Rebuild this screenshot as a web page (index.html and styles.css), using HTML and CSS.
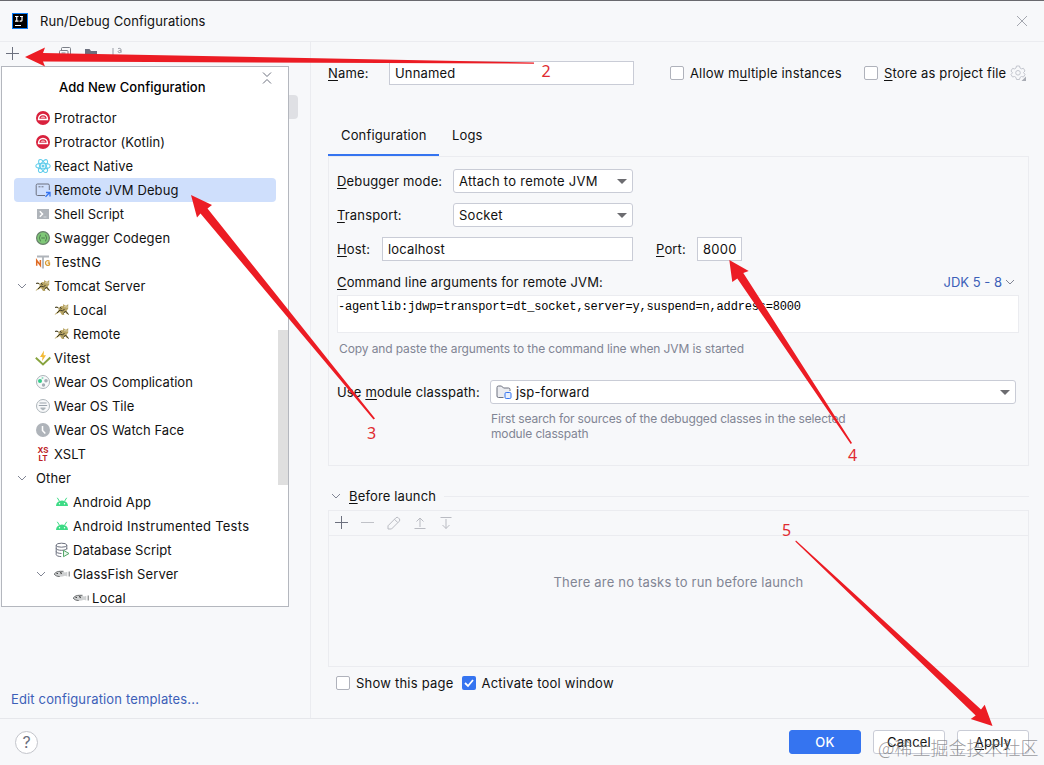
FILE: index.html
```html
<!DOCTYPE html>
<html lang="en">
<head>
<meta charset="utf-8">
<title>Run/Debug Configurations</title>
<link rel="stylesheet" href="styles.css">
</head>
<body>
<svg width="0" height="0" class="sprites">
  <symbol id="protractor" viewBox="0 0 16 16"><circle cx="8" cy="8" r="7" fill="#d9213d"/><path d="M3.600 9.500V9a4.400 4.400 0 0 1 8.800 0v.5z" fill="none" stroke="#fff" stroke-width="1.500"/><path d="M5.500 8.200a2.600 2.600 0 0 1 5 0z" fill="#fff" opacity=".6"/></symbol>
  <symbol id="react" viewBox="0 0 16 16"><g fill="none" stroke="#62cdeb" stroke-width="1.1"><ellipse cx="8" cy="8" rx="7.2" ry="2.8"/><ellipse cx="8" cy="8" rx="7.2" ry="2.8" transform="rotate(60 8 8)"/><ellipse cx="8" cy="8" rx="7.2" ry="2.8" transform="rotate(120 8 8)"/></g><circle cx="8" cy="8" r="1.5" fill="#62cdeb"/></symbol>
  <symbol id="remote" viewBox="0 0 16 16"><path d="M10 13.5H2.500a1.300 1.300 0 0 1-1.300-1.300V3.300A1.300 1.300 0 0 1 2.500 2H13a1.300 1.300 0 0 1 1.300 1.300V8" fill="none" stroke="#6c707e"/><path d="M3.500 4.800h2m1 0h2" stroke="#6c707e"/><path d="M10.500 14.800l4-4m-3.500-.3h4v4" fill="none" stroke="#3574f0" stroke-width="1.300"/></symbol>
  <symbol id="shell" viewBox="0 0 16 16"><path d="M2 3h12v10H2z" fill="#afb4ba"/><path d="M4.800 5.300L7.500 8l-2.700 2.700" fill="none" stroke="#fff" stroke-width="1.500"/><path d="M8.500 11h3" stroke="#d7dade"/></symbol>
  <symbol id="swagger" viewBox="0 0 16 16"><circle cx="8" cy="8" r="6.400" fill="#7fc877" stroke="#68806b" stroke-width="1.200"/><path d="M6 4.800c-1.500 0-.5 2.500-2 3.200 1.500.7.500 3.200 2 3.200M10 4.800c1.500 0 .5 2.500 2 3.200-1.500.7-.5 3.200-2 3.200M6.300 8h3.600" fill="none" stroke="#47704b" stroke-width=".9"/></symbol>
  <symbol id="testng" viewBox="0 0 16 16"><path d="M2 2.500h12M8 2.500v12" stroke="#afb4ba" stroke-width="1.800"/><path d="M1.700 11.800V6.300l3.700 5.200V6" fill="none" stroke="#df6b24" stroke-width="1.500"/><path d="M14.500 7.500c-1.300-1.500-4-1-4 1.500s2.700 3 4 1.700V9h-1.800" fill="none" stroke="#d99b30" stroke-width="1.300"/></symbol>
  <symbol id="tomcat" viewBox="0 0 16 16"><path d="M1 5.500c2-1.500 3.500-.5 4 .5l2-2 2 .2.300-2.200 1.800 1.500h1.500L14.200 2v4.500L12.500 9l2.500 3.500-2-.2-2.200-2.300-1.300 1.500 1 1.500H8L6 10l-4.500 2.500H.5L4 9 5 6.500z" fill="#b7a462"/><path d="M1 5.500c1.500-.7 2.600-.4 3.500.8M3 11l3-3 2.500 1 2-2M9.500 11.500l2-2.500 3 3.500M6 5l1.500 2" fill="none" stroke="#3c3928"/><path d="M10.500 4.200h1v1h-1zM12.500 4.500h1v1h-1z" fill="#fff"/></symbol>
  <symbol id="vitest" viewBox="0 0 16 16"><path d="M.800 7.800L8 14.500l7.300-7" fill="none" stroke="#87a33e" stroke-width="1.900"/><path d="M9 .5L5 7h2.500L7 11.200 11 5.200H8.600z" fill="#f3ba35"/></symbol>
  <symbol id="complication" viewBox="0 0 16 16"><circle cx="8" cy="8" r="6.500" fill="#f8f9fa" stroke="#adb5ba"/><circle cx="5" cy="7" r="2" fill="#35cb8a"/><circle cx="11" cy="6.800" r="1.800" fill="#a5adb5"/><circle cx="8.500" cy="11" r="1.700" fill="#a5adb5"/><circle cx="7.500" cy="4" r="1" fill="#8fd9bc"/></symbol>
  <symbol id="tile" viewBox="0 0 16 16"><circle cx="8" cy="8" r="6.500" fill="#f8f9fa" stroke="#adb5ba"/><path d="M4.500 5h7M3.800 7.500h8.400" stroke="#9ba4ac"/><path d="M5.500 9.500h5v1.200L8 12.500l-2.500-1.800z" fill="#adb5ba"/></symbol>
  <symbol id="clock" viewBox="0 0 16 16"><circle cx="8" cy="8" r="7" fill="#afb4ba"/><path d="M7.500 4v4.500l2.800 3" fill="none" stroke="#fff" stroke-width="1.500"/></symbol>
  <symbol id="xslt" viewBox="0 0 16 16"><g class="xslt-text"><text x="8" y="7">XS</text><text x="8" y="15">LT</text></g></symbol>
  <symbol id="android" viewBox="0 0 16 16"><path d="M2 12a6 5.600 0 0 1 12 0z" fill="#3ddb85"/><path d="M3.300 3.800l2 3.200M12.700 3.800l-2 3.200" stroke="#3ddb85"/><circle cx="5.500" cy="9.700" r=".7" fill="#fff"/><circle cx="10.500" cy="9.700" r=".7" fill="#fff"/></symbol>
  <symbol id="database" viewBox="0 0 16 16"><g fill="none" stroke="#6c707e"><ellipse cx="7.500" cy="3.200" rx="5.300" ry="2"/><path d="M2.200 3.200v9.500c0 1 2.300 1.800 5 1.900M12.800 3.200v4.300M2.200 6.300c0 1.200 2.400 2 5.300 2s5.300-.8 5.300-2M2.200 9.500c0 1 2 1.900 5.300 2"/></g><path d="M9.500 8.300v6.400l5.500-3.200z" fill="#e9f7eb" stroke="#55a76a"/></symbol>
  <symbol id="fish" viewBox="0 0 16 16"><path d="M.200 8C2.500 4.700 7 4.600 11 6.400l2.300-.6v4.600L11 9.800C7 11.500 2.500 11.300.200 8z" fill="#cfd1d2"/><path d="M.200 8C2 5.800 4 5.300 6.500 5.300h3M.200 8c1 1.700 3 2.400 5.500 2.500M15.200 5.500v5" stroke="#6a6d6f" fill="none"/><path d="M6.500 6l1 2M2.500 7.500h1.500" stroke="#444" stroke-width="1.200"/></symbol>
  <symbol id="chevron" viewBox="0 0 16 16"><path d="M4 6l4 4 4-4" fill="none" stroke="#818594"/></symbol>
</svg>

<header class="titlebar">
  <svg class="logo" width="16" height="16" viewBox="0 0 16 16"><path d="M0 0h16v16H0z" fill="#087cfa"/><path d="M1 1h14v14H1z" fill="#000"/><path d="M3 3.500h3.500M4.750 3.500v4.500M3 8.200h3.500M8 3.500h3M10 3.500v3.700c0 1-1.500 1.200-2.300.5M3 12.500h6" fill="none" stroke="#fff" stroke-width="1.200"/></svg>
  <h1>Run/Debug Configurations</h1>
  <svg class="close" width="12" height="12" viewBox="0 0 12 12"><path d="M1 1l10 10M11 1L1 11" stroke="#a4a7af"/></svg>
</header>

<main class="content">
  <aside class="sidebar">
    <div class="toolbar">
      <svg width="14" height="16" viewBox="0 0 14 16"><path d="M0 7.500h13M6.500 1v13" stroke="#6c707e"/></svg>
      <svg class="copy" width="14" height="16" viewBox="0 0 14 16"><path d="M3.500 4V2.500A1 1 0 0 1 4.500 1.500h7a1 1 0 0 1 1 1v7a1 1 0 0 1-1 1H10M1.500 5.500a1 1 0 0 1 1-1H9a1 1 0 0 1 1 1v8H1.500zM3.500 7h4" fill="none" stroke="#7b7f88"/></svg>
      <svg width="14" height="16" viewBox="0 0 14 16"><path d="M1 3h4.500l1.500 2h6v8H1z" fill="#6c707e"/></svg>
      <svg width="14" height="16" viewBox="0 0 14 16"><path d="M3 2v11M8 2.800c1-.9 3-.5 3 .8v3.200M11 4.300c-3.500 0-3.500 2.300-1.700 2.300 1 0 1.700-.5 1.700-1.200" fill="none" stroke="#9b9fa8"/></svg>
    </div>
    <div class="selection"></div>
    <a class="templates">Edit configuration templates...</a>

    <section class="popup">
      <div class="popup-head">
        <h2>Add New Configuration</h2>
        <svg width="12" height="14" viewBox="0 0 12 14"><path d="M2 1.500l4 4 4-4M2 12.500l4-4 4 4" fill="none" stroke="#6c707e"/></svg>
      </div>
      <ul class="tree">
        <li><svg><use href="#protractor"/></svg>Protractor</li>
        <li><svg><use href="#protractor"/></svg>Protractor (Kotlin)</li>
        <li><svg><use href="#react"/></svg>React Native</li>
        <li class="selected"><svg><use href="#remote"/></svg>Remote JVM Debug</li>
        <li class="tight"><svg><use href="#shell"/></svg>Shell Script</li>
        <li><svg><use href="#swagger"/></svg>Swagger Codegen</li>
        <li class="loose"><svg><use href="#testng"/></svg>TestNG</li>
        <li class="group"><svg class="chev"><use href="#chevron"/></svg><svg><use href="#tomcat"/></svg>Tomcat Server</li>
        <li class="deep"><svg><use href="#tomcat"/></svg>Local</li>
        <li class="deep"><svg><use href="#tomcat"/></svg>Remote</li>
        <li class="loose"><svg><use href="#vitest"/></svg>Vitest</li>
        <li class="tight"><svg><use href="#complication"/></svg>Wear OS Complication</li>
        <li class="tight"><svg><use href="#tile"/></svg>Wear OS Tile</li>
        <li class="tight"><svg><use href="#clock"/></svg>Wear OS Watch Face</li>
        <li><svg><use href="#xslt"/></svg>XSLT</li>
        <li class="group"><svg class="chev"><use href="#chevron"/></svg>Other</li>
        <li class="deep"><svg><use href="#android"/></svg>Android App</li>
        <li class="deep loose"><svg><use href="#android"/></svg>Android Instrumented Tests</li>
        <li class="deep tight"><svg><use href="#database"/></svg>Database Script</li>
        <li class="deep group"><svg class="chev"><use href="#chevron"/></svg><svg><use href="#fish"/></svg>GlassFish Server</li>
        <li class="deeper"><svg><use href="#fish"/></svg>Local</li>
      </ul>
      <div class="scroll-thumb"></div>
    </section>
  </aside>

  <section class="editor">
    <div class="name-row">
      <label class="name-label"><u>N</u>ame:</label>
      <div class="field name-field">Unnamed</div>
      <span class="check allow"><i></i>Allow m<u>u</u>ltiple instances</span>
      <span class="check store"><i></i><span><u>S</u>tore as project file</span></span>
      <svg class="gear" width="16" height="16" viewBox="0 0 16 16"><path d="M6.500 1h3l.5 2 1.500.8 2-.5L15 6l-1.500 1.500L15 9.500l-1.500 2.500-2-.5-1.500 1-.5 2h-3l-.5-2-1.500-1-2 .5L1 9.500 2.500 7.800 1 6l1.500-2.600 2 .5L6 3z" fill="none" stroke="#c3c6ce"/><circle cx="8" cy="7.800" r="2.300" fill="none" stroke="#c3c6ce"/><path d="M16 11.500V16h-4.500z" fill="#a9acb4"/></svg>
    </div>

    <nav class="tabs"><span class="tab active">Configuration</span><span class="tab">Logs</span></nav>

    <div class="panel">
      <div class="row"><label class="wide"><u>D</u>ebugger mode:</label><div class="field combo loose">Attach to remote JVM<b></b></div></div>
      <div class="row"><label class="wide"><u>T</u>ransport:</label><div class="field combo loose">Socket<b></b></div></div>
      <div class="row"><label class="host-label"><u>H</u>ost:</label><div class="field host">localhost</div><label class="port-label"><u>P</u>ort:</label><div class="field port loose">8000</div></div>
      <div class="args-head"><label><u>C</u>ommand line arguments for remote JVM:</label><a>JDK 5 - 8<svg width="14" height="14" viewBox="1 1 14 14"><use href="#chevron" width="16" height="16"/></svg></a></div>
      <div class="args">-agentlib:jdwp=transport=dt_socket,server=y,suspend=n,address=8000</div>
      <p class="hint">Copy and paste the arguments to the command line when JVM is started</p>
      <div class="module-row">
        <label>Use <u>m</u>odule classpath:</label>
        <div class="field module"><svg width="16" height="16" viewBox="0 0 16 16"><path d="M7.500 13.500h-5a1.500 1.500 0 0 1-1.500-1.500V3.500A1.500 1.500 0 0 1 2.500 2h3l2 2h5A1.500 1.500 0 0 1 14 5.500V7" fill="#ebecf0" stroke="#6c707e"/><rect x="9" y="8.500" width="6" height="6" rx="1.200" fill="#e7effd" stroke="#3574f0"/></svg>jsp-forward<b></b></div>
      </div>
      <p class="hint module-hint">First search for sources of the debugged classes in the selected<br>module classpath</p>
    </div>

    <div class="before-head"><svg width="16" height="16"><use href="#chevron"/></svg><span><u>B</u>efore launch</span><hr></div>
    <div class="tasks">
      <div class="task-tools">
        <svg width="16" height="16" viewBox="0 0 16 16"><path d="M1 7.500h13M7.500 1v13" stroke="#6c707e"/></svg>
        <svg width="16" height="16" viewBox="0 0 16 16"><path d="M1 7.500h13" stroke="#c0c2c8"/></svg>
        <svg width="16" height="16" viewBox="0 0 16 16"><path d="M2 14v-3.200l7.800-7.900a1.800 1.800 0 0 1 2.600 0l.8.800a1.800 1.800 0 0 1 0 2.600L5.500 14zM8.500 4.300l3.300 3.300" fill="none" stroke="#b9bbc2"/></svg>
        <svg width="16" height="16" viewBox="0 0 16 16"><path d="M2.500 13.500h11M8 12V3M4.500 6.500L8 3l3.500 3.500" fill="none" stroke="#b9bbc2"/></svg>
        <svg width="16" height="16" viewBox="0 0 16 16"><path d="M2.500 2.500h11M8 4v9.500M4.500 10L8 13.500l3.500-3.500" fill="none" stroke="#b9bbc2"/></svg>
      </div>
      <p>There are no tasks to run before launch</p>
    </div>
    <div class="bottom-checks">
      <span class="check"><i></i>Show this page</span>
      <span class="check"><i class="on"><svg width="14" height="14" viewBox="0 0 14 14"><path d="M3 7l3 3 5-6" fill="none" stroke="#fff" stroke-width="1.800"/></svg></i>Activate tool window</span>
    </div>
  </section>
</main>

<footer class="footer">
  <span class="help">?</span>
  <div class="buttons"><button class="primary">OK</button><button>Cancel</button><button><u>A</u>pply</button></div>
</footer>

<div class="watermark">@稀土掘金技术社区</div>
<svg class="annotations" width="1044" height="765" viewBox="0 0 1044 765">
  <g fill="#ec1c24">
    <path d="M25 57L45 47.500 43 53 534 62.500V63.700L43 61.500 45 66.500z"/>
    <path d="M191 195L212 205 207.500 208.500 375 418.500 373.500 419.500 200.500 213.500 197 217.500z"/>
    <path d="M729.300 260L748.700 271 743.300 273 852 443 850.700 444 737.300 278.500 732.300 282z"/>
    <path d="M992.500 726L984.700 704.700 981 709.500 796 540.500 795.300 541.500 975.700 715.500 970.700 719z"/>
  </g>
  <g class="numbers"><text x="541.500" y="77">2</text><text x="367" y="439">3</text><text x="848" y="461">4</text><text x="782" y="536">5</text></g>
</svg>
</body>
</html>
```
FILE: styles.css
```css
* { box-sizing: border-box; }
body {
  margin: 0; width: 1044px; height: 765px; overflow: hidden; position: relative;
  display: flex; flex-direction: column;
  background: #f7f8fa; color: #111;
  font: 13px/16px Inter, "Noto Sans", sans-serif; letter-spacing: .15px;
}
h1, h2, p, ul { margin: 0; padding: 0; font-weight: 400; font-size: inherit; }
svg { display: block; flex: none; }
.sprites { position: absolute; }
u { text-decoration: underline; text-underline-offset: 2px; text-decoration-thickness: 1px; text-decoration-skip-ink: none; }
a { color: #3c5fb8; }

.titlebar { height: 42px; flex: none; border-top: 1px solid #69696e; border-bottom: 1px solid #ebecf0; display: flex; align-items: center; padding: 0 16px 0 12px; }
.titlebar h1 { margin-left: 12px; flex: 1; letter-spacing: .1px; }

.content { display: flex; height: 676px; flex: none; }
.sidebar { width: 311px; border-right: 1px solid #ebecf0; position: relative; display: flex; flex-direction: column; }
.toolbar { height: 24px; display: flex; gap: 12px; padding: 4px 6px 0; }
.toolbar .copy { margin-left: 26px; }
.selection { align-self: flex-end; width: 100px; height: 24px; margin: 29px 12px 0 0; background: #dfe0e4; border-radius: 4px; }
.templates { margin: auto 0 11px 11px; }

.popup { position: absolute; left: 1px; top: 24px; width: 288px; height: 541px; background: #fff; border: 1px solid #b4b7be; overflow: hidden; }
.popup-head { height: 39px; display: flex; justify-content: space-between; padding: 4px 15px 0 57px; }
.popup-head h2 { font-weight: 500; padding-top: 8px; color: #000; letter-spacing: .07px; }
.tree { list-style: none; letter-spacing: .12px; }
.tree li { height: 24px; display: flex; align-items: center; margin: 0 12px; padding-left: 21px; gap: 3px; border-radius: 4px; white-space: nowrap; }
.tree li svg { width: 16px; height: 16px; }
.tree .selected { background: #cfdffc; }
.tree .group { padding-left: 0; }
.tree .group .chev { margin-right: 3px; }
.tree .group .chev + svg { margin-left: -1px; }
.tree .deep { padding-left: 40px; }
.tree .deep.group { padding-left: 19px; }
.tree .deeper { padding-left: 59px; }
.tree .tight { letter-spacing: .03px; }
.loose, .tree .loose { letter-spacing: .26px; }
.scroll-thumb { position: absolute; right: 0; top: 263px; width: 10px; height: 155px; background: #dfdfdf; }
.xslt-text { font: 700 8px Inter, sans-serif; fill: #bd1e27; text-anchor: middle; letter-spacing: 0; }

.editor { flex: 1; padding: 19px 15px 0 17px; display: flex; flex-direction: column; }
.field { height: 24px; border: 1px solid #c9ccd6; background: #fff; display: flex; align-items: center; padding: 0 5px; }
.name-row { display: flex; height: 24px; align-items: center; }
.name-label { width: 61px; }
.name-field { width: 245px; }
.check { display: flex; align-items: center; white-space: nowrap; }
.check i { width: 14px; height: 14px; border: 1px solid #afb2bb; border-radius: 2px; background: #fff; margin-right: 6px; flex: none; }
.check i.on { background: #3574f0; border: 0; }
.allow { margin-left: 36px; width: 194px; white-space: pre; }
.store { width: 142px; }
.gear { margin-left: 4px; }
.tabs { height: 38px; margin-top: 34px; display: flex; }
.tab { height: 38px; padding: 8px 13px; }
.tab.active { width: 111px; border-bottom: 3px solid #3574f0; }

.panel { height: 310px; margin-top: -1px; border: 1px solid #ebecf0; padding: 12px 9px 0 8px; flex: none; display: flex; flex-direction: column; }
.row { display: flex; align-items: center; height: 24px; margin-bottom: 10px; }
.row .wide { width: 116px; }
.combo { width: 180px; border-radius: 3px; }
.field b { margin-left: auto; border: 5px solid transparent; border-top-color: #6c6c70; border-bottom: 0; }
.host-label { width: 45px; }
.host { width: 251px; }
.port-label { margin-left: 23px; width: 41px; }
.port { width: 45px; }
.args-head { display: flex; justify-content: space-between; height: 24px; align-items: center; padding-bottom: 2px; }
.args-head a { display: flex; align-items: center; margin-right: 2px; gap: 1px; letter-spacing: 0; }
.args { height: 38px; border: 1px solid #ebecf0; background: #fff; color: #000; font: 12px/14px "Liberation Mono", monospace; letter-spacing: -.19px; padding: 4px 0 0; }
.hint { font-size: 12px; line-height: 15px; letter-spacing: -.11px; color: #818594; margin: 8px 0 0 2px; }
.module-row { display: flex; align-items: center; margin-top: 24px; }
.module-row label { width: 153px; }
.module { width: 526px; border-radius: 3px; }
.module svg { margin-right: 4px; }
.module-hint { margin: 7px 0 0 154px; letter-spacing: -.15px; }

.before-head { display: flex; align-items: center; height: 16px; margin-top: 22px; flex: none; }
.before-head span { margin-left: 5px; }
.before-head hr { flex: 1; border: 0; border-top: 1px solid #ebecf0; margin: 0 0 0 8px; }
.tasks { height: 157px; margin-top: 6px; border: 1px solid #ebecf0; flex: none; }
.task-tools { height: 25px; border-bottom: 1px solid #ebecf0; display: flex; align-items: center; gap: 10px; padding-left: 5px; }
.tasks p { color: #818594; text-align: center; margin-top: 38px; letter-spacing: .2px; }
.bottom-checks { display: flex; gap: 8px; margin: 8px 0 0 8px; letter-spacing: .22px; }

.footer { height: 47px; border-top: 1px solid #e6e7eb; display: flex; justify-content: space-between; align-items: center; padding: 0 15px; }
.help { width: 23px; height: 23px; border: 1px solid #c3c5cb; border-radius: 50%; background: #fff; display: flex; align-items: center; justify-content: center; font-size: 16px; color: #6c707e; letter-spacing: 0; }
.buttons { display: flex; gap: 12px; }
button { width: 72px; height: 24px; padding: 0; border: 1px solid #c9ccd6; border-radius: 3px; background: #fff; color: #111; font: inherit; letter-spacing: .2px; }
.primary { background: #3574f0; border-color: #3574f0; color: #fff; font-weight: 500; }

.watermark { position: absolute; left: 878px; top: 736px; font: 300 18px/22px "Noto Sans CJK SC", sans-serif; letter-spacing: 0; color: rgba(110, 110, 115, .7); white-space: nowrap; }
.annotations { position: absolute; left: 0; top: 0; }
.numbers { font: 16px "Noto Sans", sans-serif; fill: #e02a30; letter-spacing: 0; }
```
